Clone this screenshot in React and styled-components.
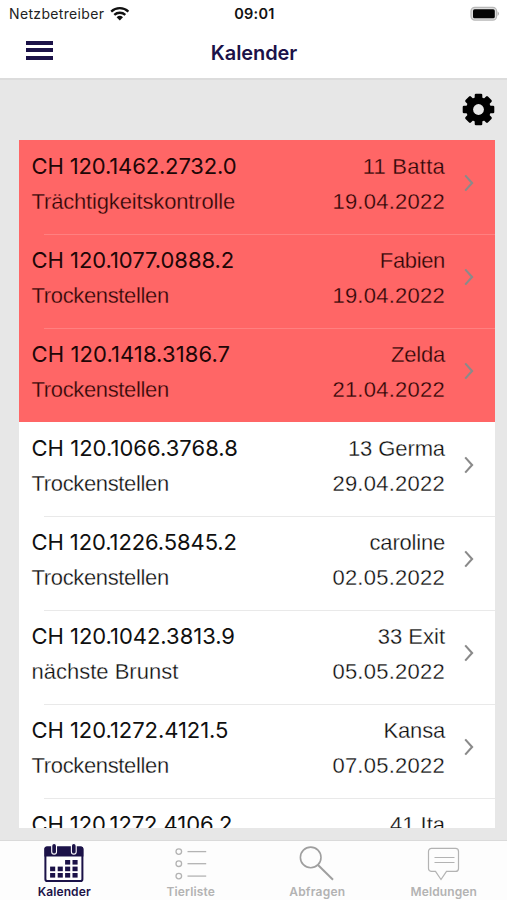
import React from 'react';
import styled, { createGlobalStyle } from 'styled-components';

const GlobalStyle = createGlobalStyle`
  * { box-sizing: border-box; }
  body { margin: 0; background: #e7e7e7; }
`;

const NAVY = '#1b1248';

const Screen = styled.div`
  width: 507px;
  height: 900px;
  display: flex;
  flex-direction: column;
  background: #e7e7e7;
  font-family: Inter, 'Liberation Sans', sans-serif;
  overflow: hidden;
`;

const Header = styled.header`
  height: 80px;
  flex: none;
  background: #fff;
  border-bottom: 2px solid #dcdcdc;
`;

const StatusBar = styled.div`
  height: 27px;
  padding: 0 7px 0 9px;
  display: grid;
  grid-template-columns: 1fr auto 1fr;
  align-items: center;
  color: #111;
`;

const Carrier = styled.div`
  display: flex;
  align-items: center;
  gap: 6px;
  font-size: 14px;
  letter-spacing: 0.34px;
  line-height: 20px;
  color: #222;
`;

const Clock = styled.div`
  font-size: 14.5px;
  font-weight: 600;
  letter-spacing: 0.25px;
  line-height: 20px;
`;

const BatterySlot = styled.div`
  display: flex;
  justify-content: flex-end;
`;

const TitleBar = styled.div`
  height: 51px;
  padding: 0 25px 0 26px;
  display: grid;
  grid-template-columns: 1fr auto 1fr;
  align-items: center;
`;

const MenuButton = styled.button`
  width: 27px;
  height: 19px;
  padding: 0;
  border: 0;
  background: none;
  display: flex;
  flex-direction: column;
  justify-content: space-between;
  margin-bottom: 5px;
`;

const MenuBar = styled.span`
  height: 4px;
  width: 27px;
  background: ${NAVY};
`;

const Title = styled.h1`
  margin: 0;
  font-size: 20px;
  font-weight: 600;
  letter-spacing: -0.1px;
  line-height: 26px;
  color: ${NAVY};
`;

const Toolbar = styled.div`
  height: 60px;
  flex: none;
  padding: 13px 12px 0 0;
  display: flex;
  justify-content: flex-end;
`;

const List = styled.main`
  height: 688px;
  flex: none;
  margin: 0 12px 0 19px;
  background: #fff;
  overflow: hidden;
`;

const Row = styled.div`
  --row: ${({ $due }) => ($due ? '#ff6666' : '#ffffff')};
  --line: ${({ $due }) => ($due ? '#ff8080' : '#e9e9e9')};
  height: 94.05px;
  padding: 9px 21.5px 0 12.5px;
  display: flex;
  background: ${({ $ruled }) => $ruled && 'linear-gradient(var(--line), var(--line)) 25px 0 / 100% 1px no-repeat'} var(--row);
`;

const Column = styled.div`
  flex: ${({ $end }) => ($end ? 'none' : '1')};
  display: flex;
  flex-direction: column;
  text-align: ${({ $end }) => ($end ? 'right' : 'left')};
  white-space: nowrap;
`;

const AnimalId = styled.div`
  height: 35px;
  line-height: 35px;
  font-size: 22px;
  letter-spacing: ${({ $track }) => $track}px;
  color: ${({ $due }) => ($due ? '#200606' : '#101010')};
`;

const Light = styled.div`
  height: 35px;
  line-height: 35px;
  font-family: 'Liberation Sans', Arial, sans-serif;
  font-size: 22px;
  letter-spacing: ${({ $track = 0 }) => $track}px;
  color: ${({ $due }) => ($due ? '#280808' : '#0c0c0c')};
  -webkit-text-stroke: 0.3px var(--row);
`;

const ChevronSlot = styled.div`
  width: 28.5px;
  height: 68px;
  display: flex;
  align-items: center;
  justify-content: flex-end;
`;

const TabBar = styled.nav`
  height: 60px;
  flex: none;
  margin-top: auto;
  border-top: 1px solid #dadada;
  background: #fdfdfd;
  display: grid;
  grid-template-columns: repeat(4, 1fr);
  padding-left: 1px;
`;

const Tab = styled.a`
  display: flex;
  flex-direction: column;
  align-items: center;
  color: ${({ $active }) => ($active ? NAVY : '#b3b3b3')};
`;

const TabIcon = styled.svg`
  width: 44px;
  height: 42px;
  display: block;
`;

const TabLabel = styled.span`
  font-size: 12px;
  font-weight: 600;
  line-height: 17px;
  letter-spacing: ${({ $track = 0.2 }) => $track}px;
`;

const Wifi = () => (
  <svg width="20" height="15" viewBox="0 0 20 15">
    <g fill="none" stroke="#111" strokeWidth="2.3">
      <path d="M1.2 5.6a12.6 12.6 0 0 1 17.2 0" />
      <path d="M4.3 8.9a8.1 8.1 0 0 1 11 0" />
    </g>
    <path d="M6.6 11.2a4.8 4.8 0 0 1 6.400 0L9.8 14.5z" fill="#111" />
  </svg>
);

const Battery = () => (
  <svg width="30" height="16" viewBox="0 0 30 16">
    <rect x="1" y="1.300" width="25.600" height="12.800" rx="3.800" fill="#dedede" stroke="#b8b8b8" strokeWidth="1.2" />
    <rect x="3" y="3.3" width="21.8" height="9" rx="1.6" fill="#050505" />
    <path d="M27.700 5.300q2.200 2.400 0 4.800z" fill="#999" />
  </svg>
);

const Gear = () => (
  <svg width="33" height="33" viewBox="-16.5 -16.5 33 33">
    <g fill="#000">
      {[0, 45, 90, 135].map((angle) => (
        <rect key={angle} x="-3.8" y="-15.8" width="7.6" height="31.6" rx="1.3" transform={`rotate(${angle})`} />
      ))}
      <circle r="12.4" />
    </g>
    <circle r="5.4" fill="#e7e7e7" />
  </svg>
);

const Chevron = () => (
  <svg width="10" height="18" viewBox="0 0 10 18">
    <path d="M1.2 1.4 8.1 9 1.2 16.6" fill="none" stroke="#8a8a8a" strokeWidth="2.1" />
  </svg>
);

const CalendarIcon = () => (
  <TabIcon viewBox="0 0 44 42">
    <rect x="3.4" y="6.5" width="37" height="33.500" rx="1.800" fill="#fff" stroke={NAVY} strokeWidth="2" />
    <path d="M2.400 7.800q0-2.300 2.300-2.300h34.400q2.300 0 2.300 2.300v7.700h-39z" fill={NAVY} />
    {[12.1, 31.8].map((x) => (
      <rect key={x} x={x - 2.4} y="2.5" width="4.8" height="10.6" rx="2.4" fill={NAVY} stroke="#fff" strokeWidth="1.1" />
    ))}
    {[[23.1, 19], [30.5, 19], [8.1, 25.6], [15.7, 25.6], [23.1, 25.6], [30.5, 25.6], [8.1, 32], [15.7, 32], [23.1, 32], [30.5, 32]].map(([x, y]) => (
      <rect key={`${x}-${y}`} x={x} y={y} width="5.1" height="4.6" fill={NAVY} />
    ))}
  </TabIcon>
);

const ListIcon = () => (
  <TabIcon viewBox="0 0 44 42" fill="none" stroke="currentColor" strokeWidth="1.3">
    {[10.6, 22.7, 35.1].map((y) => (
      <React.Fragment key={y}>
        <circle cx="9.8" cy={y} r="2.8" />
        <path d={`M18.5 ${y}H37.200`} />
      </React.Fragment>
    ))}
  </TabIcon>
);

const SearchIcon = () => (
  <TabIcon viewBox="0 0 44 42" fill="none" stroke="#9f9f9f" strokeWidth="1.6">
    <circle cx="15.7" cy="16.4" r="10.3" />
    <path d="M23 24 38 38.800" strokeWidth="2" />
  </TabIcon>
);

const MessageIcon = () => (
  <TabIcon viewBox="0 0 44 42" fill="none" stroke="currentColor" strokeWidth="1.2">
    <path d="M9.500 7.400h24a3 3 0 0 1 3 3v17a3 3 0 0 1-3 3H24.500L19 38.500 13.500 30.400h-4a3 3 0 0 1-3-3v-17a3 3 0 0 1 3-3z" />
    <path d="M12.500 16.500h20M12.500 21.500h20" />
  </TabIcon>
);

const entries = [
  { id: 'CH 120.1462.2732.0', name: '11 Batta', task: 'Trächtigkeitskontrolle', date: '19.04.2022', due: true, idTrack: -0.14, taskTrack: -0.16, nameTrack: 0.25 },
  { id: 'CH 120.1077.0888.2', name: 'Fabien', task: 'Trockenstellen', date: '19.04.2022', due: true, idTrack: -0.04, taskTrack: -0.35, nameTrack: -0.35 },
  { id: 'CH 120.1418.3186.7', name: 'Zelda', task: 'Trockenstellen', date: '21.04.2022', due: true, idTrack: 0.1, taskTrack: -0.35, nameTrack: -0.2 },
  { id: 'CH 120.1066.3768.8', name: '13 Germa', task: 'Trockenstellen', date: '29.04.2022', idTrack: 0.03, taskTrack: -0.35, nameTrack: -0.1 },
  { id: 'CH 120.1226.5845.2', name: 'caroline', task: 'Trockenstellen', date: '02.05.2022', idTrack: -0.1, taskTrack: -0.35, nameTrack: -0.2 },
  { id: 'CH 120.1042.3813.9', name: '33 Exit', task: 'nächste Brunst', date: '05.05.2022', idTrack: -0.03, taskTrack: 0, nameTrack: 0 },
  { id: 'CH 120.1272.4121.5', name: 'Kansa', task: 'Trockenstellen', date: '07.05.2022', idTrack: -0.05, taskTrack: -0.35, nameTrack: -0.2 },
  { id: 'CH 120.1272.4106.2', name: '41 Ita', idTrack: -0.1, nameTrack: 0 },
];

const tabs = [
  { label: 'Kalender', Icon: CalendarIcon, active: true, track: 0.1 },
  { label: 'Tierliste', Icon: ListIcon, track: 0.15 },
  { label: 'Abfragen', Icon: SearchIcon, track: 0.2 },
  { label: 'Meldungen', Icon: MessageIcon, track: 0.1 },
];

export default function App() {
  return (
    <Screen>
      <GlobalStyle />
      <Header>
        <StatusBar>
          <Carrier>Netzbetreiber <Wifi /></Carrier>
          <Clock>09:01</Clock>
          <BatterySlot><Battery /></BatterySlot>
        </StatusBar>
        <TitleBar>
          <MenuButton aria-label="Menü"><MenuBar /><MenuBar /><MenuBar /></MenuButton>
          <Title>Kalender</Title>
        </TitleBar>
      </Header>
      <Toolbar><Gear /></Toolbar>
      <List>
        {entries.map(({ id, name, task, date, due, idTrack, taskTrack, nameTrack }, i) => (
          <Row key={id} $due={due} $ruled={i !== 0 && i !== 3}>
            <Column>
              <AnimalId $due={due} $track={idTrack}>{id}</AnimalId>
              <Light $due={due} $track={taskTrack}>{task}</Light>
            </Column>
            <Column $end>
              <Light $due={due} $track={nameTrack}>{name}</Light>
              <Light $due={due} $track={0.25}>{date}</Light>
            </Column>
            <ChevronSlot><Chevron /></ChevronSlot>
          </Row>
        ))}
      </List>
      <TabBar>
        {tabs.map(({ label, Icon, active, track }) => (
          <Tab key={label} $active={active}>
            <Icon />
            <TabLabel $track={track}>{label}</TabLabel>
          </Tab>
        ))}
      </TabBar>
    </Screen>
  );
}
